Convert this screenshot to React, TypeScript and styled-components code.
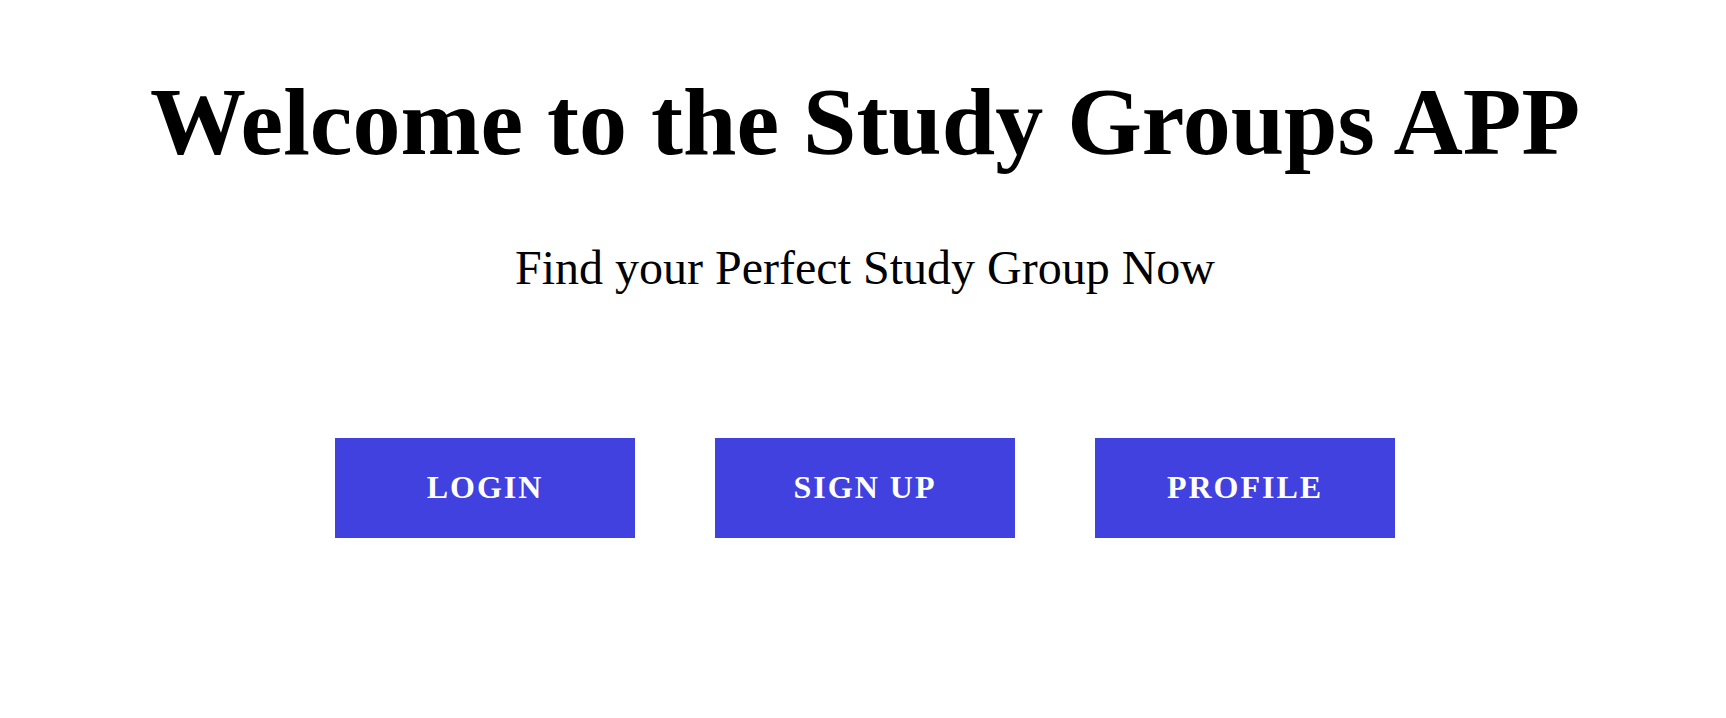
import React from "react";
import styled, { createGlobalStyle } from "styled-components";

const GlobalStyle = createGlobalStyle`
  html, body {
    margin: 0;
    padding: 0;
    background: #ffffff;
  }
  body {
    font-family: "Liberation Serif", "Times New Roman", Times, serif;
    color: #000000;
  }
`;

const Page = styled.main`
  display: flex;
  flex-direction: column;
  align-items: center;
  padding: 66px 4px 0 8px;
  box-sizing: border-box;
  width: 100%;
`;

const Title = styled.h1`
  margin: 0;
  font-size: 96px;
  font-weight: 700;
  line-height: normal;
  text-align: center;
  white-space: nowrap;
`;

const Subtitle = styled.p`
  margin: 63px 0 0;
  font-size: 48px;
  font-weight: 400;
  line-height: normal;
  text-align: center;
`;

const ButtonRow = styled.nav`
  display: flex;
  gap: 80px;
  margin-top: 143px;
`;

const ActionButton = styled.button`
  display: flex;
  align-items: center;
  justify-content: center;
  width: 300px;
  height: 100px;
  border: none;
  border-radius: 0;
  background: #4141e0;
  color: #ffffff;
  font-family: "Liberation Serif", "Times New Roman", Times, serif;
  font-size: 32px;
  font-weight: 700;
  letter-spacing: 2px;
  line-height: normal;
  padding: 0 0 2px;
  cursor: pointer;
`;

export default function App() {
  return (
    <>
      <GlobalStyle />
      <Page>
        <Title>Welcome to the Study Groups APP</Title>
        <Subtitle>Find your Perfect Study Group Now</Subtitle>
        <ButtonRow>
          <ActionButton>LOGIN</ActionButton>
          <ActionButton>SIGN UP</ActionButton>
          <ActionButton>PROFILE</ActionButton>
        </ButtonRow>
      </Page>
    </>
  );
}
